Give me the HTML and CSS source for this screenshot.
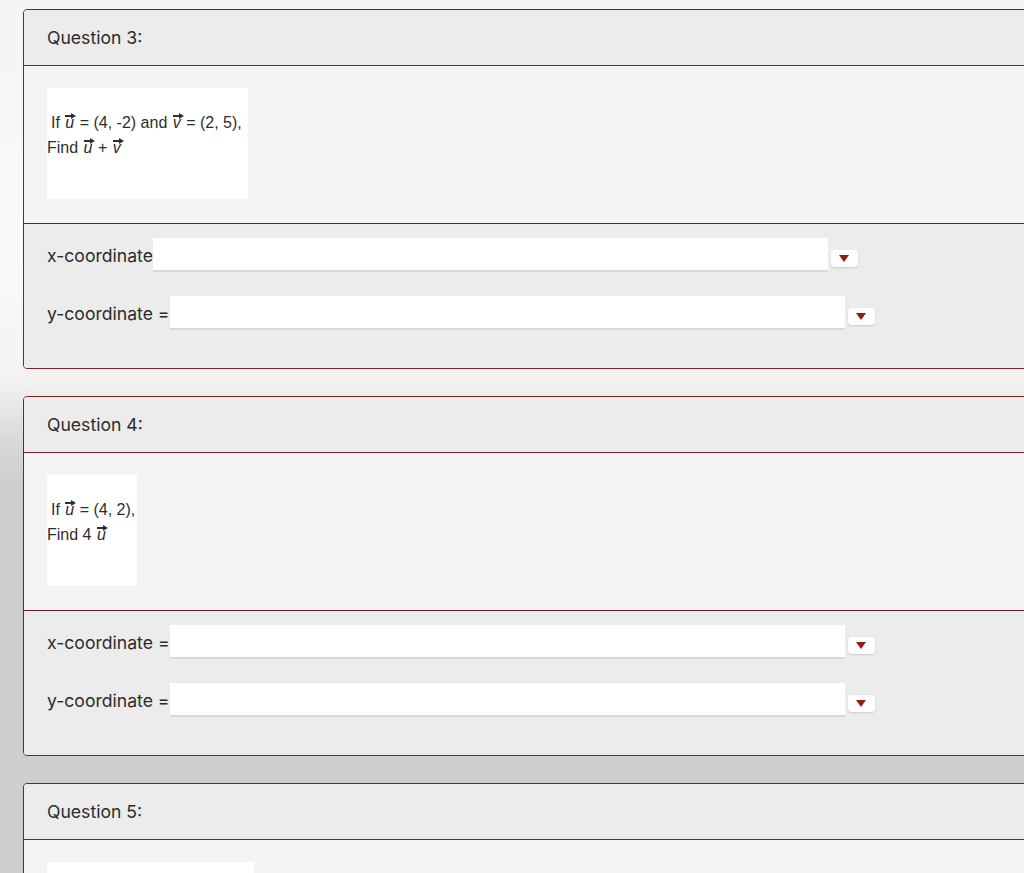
FILE: index.html
```html
<!DOCTYPE html>
<html>

<head>
    <meta charset="utf-8">
    <title>Vectors Quiz</title>
    <link rel="stylesheet" href="styles.css">
</head>

<body>
    <div class="page">
        <div class="question">
            <div class="q-head">Question 3:</div>
            <div class="q-body">
                <div class="q-image">
                    <div class="line first">If <span class="vec">u</span> = (4, -2) and <span class="vec">v</span> = (2, 5),</div>
                    <div class="line">Find <span class="vec">u</span> + <span class="vec">v</span></div>
                </div>
            </div>
            <div class="q-answers">
                <div class="answer-row">
                    <label class="answer-label">x-coordinate</label>
                    <input class="answer-input" type="text">
                    <span class="drop"><span class="caret"></span></span>
                </div>
                <div class="answer-row">
                    <label class="answer-label">y-coordinate =</label>
                    <input class="answer-input" type="text">
                    <span class="drop"><span class="caret"></span></span>
                </div>
            </div>
        </div>

        <div class="question">
            <div class="q-head">Question 4:</div>
            <div class="q-body">
                <div class="q-image narrow">
                    <div class="line first">If <span class="vec">u</span> = (4, 2),</div>
                    <div class="line">Find 4 <span class="vec">u</span></div>
                </div>
            </div>
            <div class="q-answers">
                <div class="answer-row">
                    <label class="answer-label">x-coordinate =</label>
                    <input class="answer-input" type="text">
                    <span class="drop"><span class="caret"></span></span>
                </div>
                <div class="answer-row">
                    <label class="answer-label">y-coordinate =</label>
                    <input class="answer-input" type="text">
                    <span class="drop"><span class="caret"></span></span>
                </div>
            </div>
        </div>

        <div class="question">
            <div class="q-head">Question 5:</div>
            <div class="q-body">
                <div class="q-image wide">
                    <div class="line first">If <span class="vec">u</span> = (3, 1) and <span class="vec">v</span> = (-1, 4),</div>
                    <div class="line">Find <span class="vec">u</span> - <span class="vec">v</span></div>
                </div>
            </div>
        </div>
    </div>
</body>

</html>
```

FILE: styles.css
```css
html {
    background: #cfcfcf;
}

body {
    margin: 0;
    overflow: hidden;
    min-height: 873px;
    background: linear-gradient(to bottom, #f4f4f4 0, #fafafa 250px, #f3f3f3 380px, #d9d9d9 440px, #cfcfcf 480px, #cfcfcf 100%);
    font-family: Inter, "Liberation Sans", sans-serif;
    color: #2b2b2b;
}

.page {
    width: 1120px;
    padding: 9px 0 0 23px;
    display: flex;
    flex-direction: column;
    gap: 27px;
}

.question {
    border: 1px solid #7d1f25;
    border-radius: 4px;
    overflow: hidden;
    background-color: #ececec;
}

.q-head {
    height: 55px;
    padding-left: 23px;
    display: flex;
    align-items: center;
    font-size: 17.6px;
    border-bottom: 1px solid #7d1f25;
    background-color: #ececec;
}

.q-body {
    padding: 22px 23px 24px;
    background-color: #f4f4f4;
    border-bottom: 1px solid #5e2024;
}

.q-image {
    width: 201px;
    height: 111px;
    box-sizing: border-box;
    padding-top: 22px;
    background-color: #fff;
    font-family: "Liberation Sans", Arial, sans-serif;
    font-size: 16px;
    line-height: 25px;
    color: #2e2e2e;
    white-space: nowrap;
}

.q-image.narrow {
    width: 90px;
}

.q-image.wide {
    width: 207px;
}

.line.first {
    padding-left: 4px;
}

.vec {
    position: relative;
    font-style: italic;
    padding: 0 1px;
}

.vec::before {
    content: "";
    position: absolute;
    left: 1px;
    top: 1px;
    width: 7px;
    height: 2px;
    background-color: #2e2e2e;
}

.vec::after {
    content: "";
    position: absolute;
    left: 7px;
    top: -1px;
    border-left: 5px solid #2e2e2e;
    border-top: 3px solid transparent;
    border-bottom: 3px solid transparent;
}

.q-answers {
    padding: 14px 23px 38px;
    display: flex;
    flex-direction: column;
    gap: 24px;
    background-color: #ececec;
}

.answer-row {
    display: flex;
    align-items: center;
}

.answer-label {
    font-size: 17.6px;
}

.answer-input {
    width: 675px;
    height: 34px;
    box-sizing: border-box;
    margin: 0;
    border: none;
    border-bottom: 2px solid #d8d8d8;
    background-color: #fff;
    outline: none;
}

.drop {
    width: 27px;
    height: 17px;
    margin: 6px 0 0 3px;
    display: flex;
    align-items: center;
    justify-content: center;
    background-color: #fff;
    border-radius: 4px;
    box-shadow: 0 1px 2px rgba(0, 0, 0, 0.15);
}

.caret {
    width: 0;
    height: 0;
    border-top: 7px solid #961b14;
    border-left: 5px solid transparent;
    border-right: 5px solid transparent;
}
```
